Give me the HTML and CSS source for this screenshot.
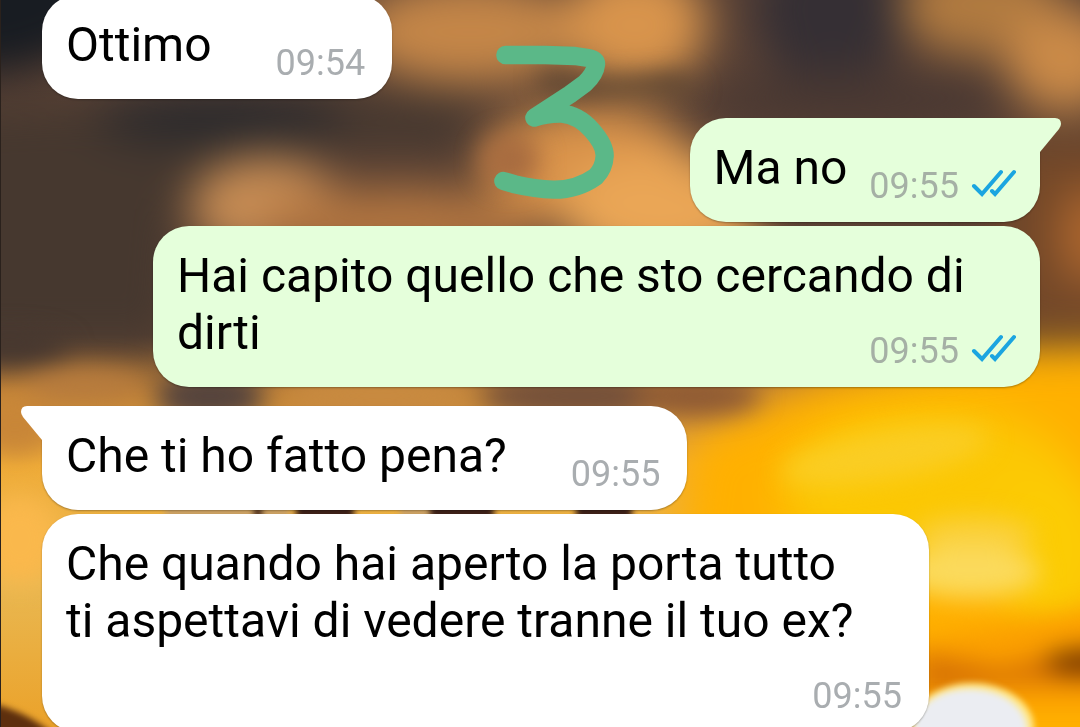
FILE: index.html
```
<!DOCTYPE html>
<html lang="it">
<head>
  <meta charset="UTF-8" />
  <meta name="viewport" content="width=device-width, initial-scale=1.0" />
  <title>Chat</title>
  <link rel="stylesheet" href="styles.css">
</head>
<body>

  <!-- blurred wallpaper -->
  <svg class="wallpaper" viewBox="0 0 1080 727" preserveAspectRatio="none" aria-hidden="true">
    <defs>
      <linearGradient id="base" x1="0" y1="0" x2="0" y2="1">
        <stop offset="0" stop-color="#5a4236" />
        <stop offset="0.46" stop-color="#5c4334" />
        <stop offset="0.54" stop-color="#c08238" />
        <stop offset="0.64" stop-color="#f0ac38" />
        <stop offset="0.8" stop-color="#e9b852" />
        <stop offset="1" stop-color="#eba22a" />
      </linearGradient>
      <filter id="soft" x="-50%" y="-50%" width="200%" height="200%" color-interpolation-filters="sRGB"><feGaussianBlur stdDeviation="22" /></filter>
      <filter id="mid" x="-50%" y="-50%" width="200%" height="200%" color-interpolation-filters="sRGB"><feGaussianBlur stdDeviation="12" /></filter>
      <filter id="sharp" x="-20%" y="-20%" width="140%" height="140%" color-interpolation-filters="sRGB"><feGaussianBlur stdDeviation="3" /></filter>
    </defs>
    <rect width="1080" height="727" fill="url(#base)" />
    <g filter="url(#soft)">
      <path d="M-60 -60H120V30L30 70L-60 80Z" fill="#181c22" />
      <path d="M-60 110L130 100L480 95L460 150L240 150L180 210L170 345L-60 345Z" fill="#46382f" />
      <ellipse cx="220" cy="118" rx="125" ry="26" fill="#29292c" />
      <ellipse cx="470" cy="32" rx="115" ry="52" fill="#c48648" />
      <ellipse cx="635" cy="25" rx="72" ry="62" fill="#d8944c" />
      <ellipse cx="265" cy="205" rx="75" ry="48" fill="#c68c54" />
      <ellipse cx="400" cy="225" rx="140" ry="38" fill="#b07440" />
      <ellipse cx="590" cy="165" rx="105" ry="60" fill="#d8924a" />
      <ellipse cx="660" cy="210" rx="100" ry="58" fill="#eaa656" />
      <ellipse cx="830" cy="10" rx="75" ry="75" fill="#352f34" />
      <ellipse cx="860" cy="100" rx="160" ry="30" fill="#493832" />
      <ellipse cx="980" cy="5" rx="80" ry="50" fill="#b07a40" />
      <ellipse cx="1065" cy="60" rx="60" ry="52" fill="#ca8a48" />
      <path d="M1000 140H1140V335H1000Z" fill="#744828" />
      <ellipse cx="1090" cy="235" rx="30" ry="50" fill="#b0682e" />
      <path d="M690 440L820 380L1000 350L1160 345V800H640Z" fill="#ffb000" />
      <ellipse cx="930" cy="490" rx="150" ry="85" fill="#fcc804" />
      <ellipse cx="1055" cy="550" rx="60" ry="80" fill="#fccc04" />
    </g>
    <g filter="url(#mid)">
      <path d="M540 72L600 80L680 74L700 92L600 96L540 88Z" fill="#54402f" />
      <ellipse cx="510" cy="160" rx="30" ry="26" fill="#a86c40" />
      <ellipse cx="10" cy="348" rx="60" ry="16" fill="#44362f" />
      <ellipse cx="85" cy="385" rx="60" ry="16" fill="#b87c3e" />
      <ellipse cx="15" cy="425" rx="40" ry="30" fill="#c88638" />
      <ellipse cx="20" cy="540" rx="40" ry="45" fill="#fab84c" />
      <ellipse cx="210" cy="396" rx="55" ry="26" fill="#54433d" />
      <ellipse cx="380" cy="396" rx="95" ry="24" fill="#c88a40" />
      <ellipse cx="580" cy="396" rx="100" ry="24" fill="#74503a" />
      <ellipse cx="695" cy="396" rx="65" ry="20" fill="#8e5a34" />
      <ellipse cx="885" cy="455" rx="105" ry="24" transform="rotate(-10 885 455)" fill="#facd24" />
      <ellipse cx="975" cy="535" rx="60" ry="18" fill="#fad03c" />
      <ellipse cx="970" cy="572" rx="70" ry="26" fill="#fbda5c" />
      <path d="M900 645L1120 605V707H900Z" fill="#fb9e00" />
      <path d="M920 652L1000 668L1110 640V684L1020 684L920 694Z" fill="#d87404" />
      <ellipse cx="1085" cy="662" rx="40" ry="13" fill="#7a3c00" />
    </g>
    <g filter="url(#sharp)">
      <path d="M-10 703Q30 712 60 740H-10Z" fill="#5d2f0e" />
      <path d="M165 508H290V518H165ZM400 508H430V518H400Z" fill="#c8a068" />
      <path d="M254 507H262V518H254ZM296 504H354V520H296ZM430 504H494V520H430ZM576 504H632V520H576Z" fill="#3c2018" />
      <ellipse cx="972" cy="728" rx="62" ry="45" fill="#ffe88c" />
      <ellipse cx="970" cy="730" rx="57" ry="41" fill="#ebedf2" />
    </g>
  </svg>

  <main class="chat">
    <div class="bubble in">
      <p class="text">Ottimo<span class="meta">09:54</span></p>
    </div>

    <div class="bubble out first">
      <svg class="tail" viewBox="0 0 21 34" aria-hidden="true"><path d="M0 0H15Q21 0 21 6Q21 8 19 11L0 34Z" /></svg>
      <p class="text">Ma no<span class="meta">09:55<svg class="ticks" viewBox="0 0 45 29" role="img" aria-label="Letto"><path d="M3 17L11 25L30 3M21 22L24 25L43 3" /></svg></span></p>
    </div>
    <div class="bubble out">
      <p class="text">Hai capito quello che sto cercando di dirti<span class="meta">09:55<svg class="ticks" viewBox="0 0 45 29" role="img" aria-label="Letto"><path d="M3 17L11 25L30 3M21 22L24 25L43 3" /></svg></span></p>
    </div>

    <div class="bubble in first">
      <svg class="tail" viewBox="0 0 21 34" aria-hidden="true"><path d="M21 0H6Q0 0 0 6Q0 8 2 11L21 34Z" /></svg>
      <p class="text">Che ti ho fatto pena?<span class="meta">09:55</span></p>
    </div>
    <div class="bubble in">
      <p class="text">Che quando hai aperto la porta tutto<br>ti aspettavi di vedere tranne il tuo ex?<span class="meta">09:55</span></p>
    </div>
  </main>

  <!-- number drawn by hand over the chat -->
  <svg class="doodle" viewBox="0 0 450 540" role="img" aria-label="3">
    <path d="M76 75L195 75L285 78L325 84Q350 88 348 104Q345 132 315 160L270 193L163 263Q200 250 245 251Q295 255 335 300Q375 345 374 378Q372 415 347 440Q290 480 220 479Q165 477 105 463L70 453" />
  </svg>

</body>
</html>
```
FILE: styles.css
```
body {
  font-family: Roboto, "Liberation Sans", sans-serif;
  background-color: #6b4a36;
  margin: 0;
  height: 100vh;
  overflow: hidden;
  position: relative;
}
.wallpaper {
  position: absolute;
  top: 0;
  left: 0;
  width: 100%;
  height: 100%;
  z-index: -1;
}
.chat {
  display: flex;
  flex-direction: column;
  gap: 4px;
  margin-top: -5px;
  padding: 0 40px 0 41px;
  border-left: 1px solid #2a211c;
}
.bubble {
  position: relative;
  box-sizing: border-box;
  max-width: 887px;
  padding: 21px 24px 26px;
  border-radius: 36px;
  box-shadow: 0 1px 2px rgba(0, 0, 0, 0.3);
}
.in {
  align-self: flex-start;
  background-color: #fff;
  fill: #fff;
}
.out {
  align-self: flex-end;
  background-color: #e5ffdb;
  fill: #e5ffdb;
}
.first {
  margin-top: 15px;
}
.in.first {
  border-top-left-radius: 0;
}
.out.first {
  border-top-right-radius: 0;
}
.tail {
  position: absolute;
  top: 0;
  width: 21px;
  height: 34px;
}
.in .tail {
  right: 100%;
}
.out .tail {
  left: 100%;
}
.text {
  display: flow-root;
  margin: 0;
  color: #000;
  font-size: 48px;
  line-height: 57px;
}
.meta {
  float: right;
  display: flex;
  align-items: center;
  margin: 26px 3px -11px 64px;
  color: #a9adb0;
  font-size: 36px;
  line-height: 42px;
}
.out .meta {
  margin-left: 22px;
  margin-right: 0;
  color: #a5b0a5;
}
.ticks {
  width: 45px;
  height: 29px;
  margin-left: 12px;
  margin-bottom: 6px;
  fill: none;
  stroke: #1ba5e0;
  stroke-width: 4;
  stroke-linecap: round;
}
.doodle {
  position: absolute;
  top: 30px;
  left: 480px;
  width: 150px;
  height: 180px;
  fill: none;
  stroke: #5bb888;
  stroke-width: 55;
  stroke-linecap: round;
  stroke-linejoin: round;
}
```
